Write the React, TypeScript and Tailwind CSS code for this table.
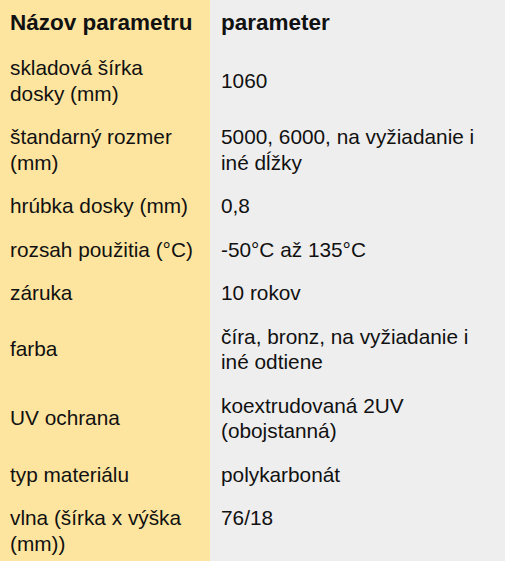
import React from "react";

interface Row {
    name: string;
    value: string;
    top?: boolean;
}

const rows: Row[] = [
    { name: "skladová šírka dosky (mm)", value: "1060" },
    { name: "štandarný rozmer (mm)", value: "5000, 6000, na vyžiadanie i iné dĺžky" },
    { name: "hrúbka dosky (mm)", value: "0,8" },
    { name: "rozsah použitia (°C)", value: "-50°C až 135°C" },
    { name: "záruka", value: "10 rokov" },
    { name: "farba", value: "číra, bronz, na vyžiadanie i iné odtiene" },
    { name: "UV ochrana", value: "koextrudovaná 2UV (obojstanná)" },
    { name: "typ materiálu", value: "polykarbonát" },
    { name: "vlna (šírka x výška (mm))", value: "76/18", top: true },
];

const App = () => {
    return (
        <div
            className="grid grid-cols-[210px_295px] w-[505px] h-[561px] overflow-hidden text-[#111] content-start"
            style={{ fontFamily: '"Liberation Sans", Arial, sans-serif' }}
        >
            {/* header */}
            <div className="bg-[#fee59f] px-[10px] py-[9px] text-[22.5px] leading-[28px] font-bold">
                Názov parametru
            </div>
            <div className="bg-[#eeeeee] px-[11px] py-[9px] text-[22.5px] leading-[28px] font-bold">
                parameter
            </div>

            {rows.map((row) => (
                <React.Fragment key={row.name}>
                    <div className="bg-[#fee59f] px-[10px] py-[9px] text-[20.8px] leading-[25.5px] flex items-center">
                        {row.name}
                    </div>
                    <div
                        className={
                            row.top
                                ? "bg-[#eeeeee] pl-[11px] pr-[8px] py-[9px] text-[20.8px] leading-[25.5px] flex items-start"
                                : "bg-[#eeeeee] pl-[11px] pr-[8px] py-[9px] text-[20.8px] leading-[25.5px] flex items-center"
                        }
                    >
                        {row.value}
                    </div>
                </React.Fragment>
            ))}
        </div>
    );
};

export default App;
